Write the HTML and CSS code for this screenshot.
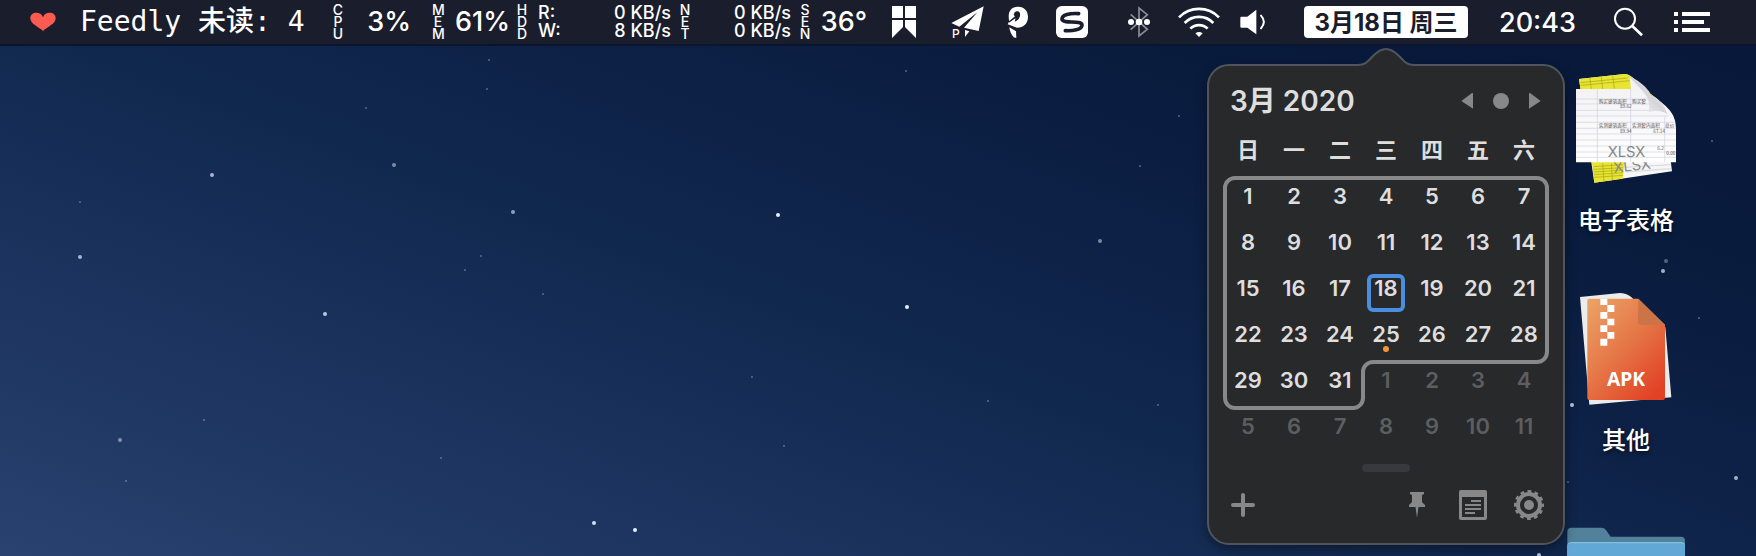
FILE: index.html
```html
<!DOCTYPE html>
<html lang="zh-CN">
<head>
<meta charset="utf-8">
<meta name="viewport" content="width=device-width, initial-scale=1">
<title>日历</title>
<link rel="stylesheet" href="styles.css">
</head>
<body>
<svg class="stars" aria-hidden="true">
  <g fill="#e8eefc">
    <circle cx="212" cy="175" r="2" opacity=".7"/><circle cx="394" cy="165" r="2" opacity=".5"/>
    <circle cx="80" cy="257" r="2" opacity=".7"/><circle cx="513" cy="212" r="2" opacity=".6"/>
    <circle cx="325" cy="314" r="2" opacity=".8"/><circle cx="594" cy="523" r="2" opacity=".9"/>
    <circle cx="778" cy="215" r="2"/><circle cx="907" cy="307" r="2"/><circle cx="635" cy="530" r="2"/>
    <circle cx="1100" cy="241" r="2" opacity=".5"/><circle cx="120" cy="440" r="2" opacity=".5"/>
    <circle cx="1572" cy="405" r="2" opacity=".8"/><circle cx="1736" cy="478" r="2" opacity=".7"/>
    <circle cx="1663" cy="271" r="2" opacity=".7"/><circle cx="1539" cy="555" r="2" opacity=".8"/>
  </g>
  <g fill="#c8d0e4" opacity=".4">
    <circle cx="80" cy="202" r="1"/><circle cx="481" cy="256" r="1"/><circle cx="465" cy="270" r="1"/>
    <circle cx="543" cy="294" r="1"/><circle cx="204" cy="420" r="1"/><circle cx="441" cy="458" r="1"/>
    <circle cx="487" cy="89" r="1"/><circle cx="366" cy="108" r="1"/><circle cx="489" cy="60" r="1"/>
    <circle cx="126" cy="481" r="1"/><circle cx="1140" cy="166" r="1"/><circle cx="752" cy="377" r="1"/>
    <circle cx="784" cy="446" r="1"/><circle cx="988" cy="401" r="1"/><circle cx="906" cy="71" r="1"/>
    <circle cx="1179" cy="116" r="1"/><circle cx="1158" cy="405" r="1"/><circle cx="1666" cy="261" r="2"/>
    <circle cx="1712" cy="141" r="1"/><circle cx="1568" cy="482" r="1"/><circle cx="1699" cy="318" r="1"/>
  </g>
</svg>

<header class="menubar">
  <div class="feed">
    <svg width="26" height="20" viewBox="95 32 78 58" aria-hidden="true"><path fill="#fc5b50" d="M134 88C120 74 96 68 96 49c0-10 8-16 18-16 9 0 17 4 20 14 3-10 11-14 20-14 10 0 18 6 18 16 0 19-24 25-38 39z"/></svg>
    <span class="feed-text">Feedly 未读: 4</span>
  </div>
  <div class="monitor">
    <span class="stack">C<br>P<br>U</span><span class="value value-cpu">3%</span>
    <span class="stack">M<br>E<br>M</span><span class="value value-mem">61%</span>
    <span class="stack">H<br>D<br>D</span>
    <span class="rates rates-disk"><span>R:</span><span>0 KB/s</span><span>W:</span><span>8 KB/s</span></span>
    <span class="stack">N<br>E<br>T</span>
    <span class="rates rates-net"><span>0 KB/s</span><span>0 KB/s</span></span>
    <span class="stack">S<br>E<br>N</span><span class="value value-temp">36°</span>
  </div>
  <nav class="extras">
    <button class="item" aria-label="窗口"><svg width="24" height="32" viewBox="0 0 24 32"><path fill="#fff" d="M0 0h11v12H0zM13 0h11v12H13zM0 14h11v7L0 32zM13 14h11v18L13 21z"/></svg></button>
    <button class="item item-plane" aria-label="发送"><svg width="34" height="33" viewBox="274 17 102 99"><path fill="#fff" d="M372 18l-97 50 24 11 54-43-40 46 44 10zM316 89l13 4-13 17z"/><text class="tiny-p" x="277" y="114">P</text></svg></button>
    <button class="item item-p" aria-label="P"><svg width="22" height="33" viewBox="199 18 66 99"><path fill="#fff" d="M205 60c-4-24 5-40 28-40 18 0 29 13 29 30 0 20-13 33-33 33l-28-10 5-9z"/><path fill="#1a1d2c" d="M219 45c1-9 7-13 13-11 9 3 8 18 0 25l-9 6 1-10-19 13v-4l18-15z"/><path fill="#fff" d="M206 82l20 12 1 20-8-2c-7-9-12-18-13-30z"/></svg></button>
    <button class="item item-s" aria-label="输入法"><svg width="32" height="32" viewBox="588 18 96 96"><rect x="588" y="18" width="96" height="96" rx="17" fill="#fff"/><path fill="none" stroke="#1a1d2c" stroke-width="11" stroke-linecap="round" d="M656 41c-27-2-50 4-50 16 0 15 59 3 60 18 0 15-29 18-50 17"/></svg></button>
    <button class="item item-bt" aria-label="蓝牙"><svg width="22" height="32" viewBox="804 21 66 96"><path fill="none" stroke="#8b8d98" stroke-width="5" d="M812 46l50 45-25 20V27l25 20-50 45"/><g fill="#fff"><circle cx="813" cy="69" r="9"/><circle cx="837" cy="69" r="10"/><circle cx="861" cy="69" r="9"/></g></svg></button>
    <button class="item item-wifi" aria-label="无线网络"><svg width="42" height="32" viewBox="954 16 126 96"><g fill="none" stroke="#fff" stroke-width="8"><path d="M957 50a84 84 0 0 1 120 0M974 67a60 60 0 0 1 86 0M991 84a37 37 0 0 1 52 0"/></g><path fill="#fff" d="M1006 98q11-8 22 0l-11 11z"/></svg></button>
    <button class="item item-sound" aria-label="音量"><svg width="26" height="26" viewBox="1139 27 78 78"><path fill="#fff" d="M1140 53q0-3 3-3h18l27-21v74l-27-20h-18q-3 0-3-3z"/><path fill="none" stroke="#fff" stroke-width="6" stroke-linecap="round" d="M1202 47q17 18 0 38"/></svg></button>
    <div class="date-item">
      <button class="date" aria-expanded="true" aria-controls="calendar">3月18日 周三</button>
      <section class="popover" id="calendar" aria-label="日历">
        <svg class="arrow" width="56" height="19" viewBox="0 0 56 19" aria-hidden="true"><path fill="#27292b" d="M0 17c8 0 10-4 15-9C20 3 23 1 28 1s8 2 13 7c5 5 7 9 15 9v2H0z"/><path fill="none" stroke="#50555d" stroke-width="2" d="M0 17c8 0 10-4 15-9C20 3 23 1 28 1s8 2 13 7c5 5 7 9 15 9"/></svg>
        <div class="cal-head">
          <h2>3月 2020</h2>
          <div class="cal-nav">
            <button aria-label="上个月"><svg width="12" height="18" viewBox="0 0 12 18"><path d="M12 2v14q0 1-1 0L1 9.500q-1-.5 0-1L11 1q1-.5 1 1z"/></svg></button>
            <button aria-label="今天"><svg width="16" height="16" viewBox="0 0 16 16"><circle cx="8" cy="8" r="8"/></svg></button>
            <button aria-label="下个月"><svg width="12" height="18" viewBox="0 0 12 18"><path d="M0 2v14q0 1 1 0l10-6.500q1-.5 0-1L1 1Q0 .5 0 2z"/></svg></button>
          </div>
        </div>
        <div class="month">
          <table>
            <thead><tr><th>日</th><th>一</th><th>二</th><th>三</th><th>四</th><th>五</th><th>六</th></tr></thead>
            <tbody>
              <tr><td>1</td><td>2</td><td>3</td><td>4</td><td>5</td><td>6</td><td>7</td></tr>
              <tr><td>8</td><td>9</td><td>10</td><td>11</td><td>12</td><td>13</td><td>14</td></tr>
              <tr><td>15</td><td>16</td><td>17</td><td class="today">18</td><td>19</td><td>20</td><td>21</td></tr>
              <tr><td>22</td><td>23</td><td>24</td><td class="event">25</td><td>26</td><td>27</td><td>28</td></tr>
              <tr><td>29</td><td>30</td><td>31</td><td class="next">1</td><td class="next">2</td><td class="next">3</td><td class="next">4</td></tr>
              <tr class="next"><td>5</td><td>6</td><td>7</td><td>8</td><td>9</td><td>10</td><td>11</td></tr>
            </tbody>
          </table>
          <svg class="outline" width="326" height="234" viewBox="0 0 326 234" aria-hidden="true"><path fill="none" stroke="#888" stroke-width="4" d="M12 2h302a10 10 0 0 1 10 10v164a10 10 0 0 1-10 10H150a10 10 0 0 0-10 10v26a10 10 0 0 1-10 10H12a10 10 0 0 1-10-10V12A10 10 0 0 1 12 2z"/></svg>
        </div>
        <div class="handle"></div>
        <div class="cal-foot">
          <button aria-label="添加"><svg width="24" height="24" viewBox="0 0 24 24"><path fill="none" stroke="#888" stroke-width="4" stroke-linecap="round" d="M12 2v20M2 12h20"/></svg></button>
          <div class="cal-tools">
            <button aria-label="固定"><svg width="16" height="26" viewBox="0 0 16 26"><path d="M1 0h14v2l-2 1v7l3 3v2h-6.500L8 26 6.500 15H0v-2l3-3V3L1 2z"/></svg></button>
            <button aria-label="日程"><svg width="28" height="30" viewBox="0 0 28 30"><path fill-rule="evenodd" d="M2 0h24q2 0 2 2v26q0 2-2 2H2q-2 0-2-2V2Q0 0 2 0zM3 7v20h22V7z"/><path d="M12 10h10v2H12zM6 14h16v2H6zM6 18h16v2H6zM6 22h10v2H6z"/></svg></button>
            <button aria-label="设置"><svg width="30" height="30" viewBox="0 0 30 30"><circle cx="15" cy="15" r="11" fill="none" stroke="#888" stroke-width="4"/><circle cx="15" cy="15" r="13.700" fill="none" stroke="#888" stroke-width="2.600" stroke-dasharray="3.800 3.373" stroke-dashoffset="1.900"/><circle cx="15" cy="15" r="5"/></svg></button>
          </div>
        </div>
      </section>
    </div>
    <time class="clock">20:43</time>
    <button class="item item-search" aria-label="搜索"><svg width="30" height="30" viewBox="972 23 90 90"><g fill="none" stroke="#fff"><circle cx="1005" cy="58" r="30" stroke-width="6"/><path stroke-width="8" d="M1026 79l30 29"/></g></svg></button>
    <button class="item item-list" aria-label="通知中心"><svg width="36" height="20" viewBox="0 0 36 20"><path fill="#fff" d="M0 0h4v4H0zM8 0h28v4H8zM0 8h4v4H0zM8 8h22v4H8zM0 16h4v4H0zM8 16h28v4H8z"/></svg></button>
  </nav>
</header>

<main class="desktop">
  <a class="file" href="#sheets">
    <svg width="120" height="120" viewBox="18 48 360 360" aria-hidden="true">
      <defs>
        <linearGradient id="sheet" x1="0" y1="0" x2="0" y2="1"><stop offset="0" stop-color="#f1f1f4"/><stop offset="1" stop-color="#fff"/></linearGradient>
        <linearGradient id="curl" x1="0" y1="1" x2="1" y2="0"><stop offset="0" stop-color="#fff"/><stop offset=".5" stop-color="#d5d5d9"/><stop offset="1" stop-color="#fff"/></linearGradient>
      </defs>
      <path fill="#f6f6f6" d="M57 87l137-15c14 0 30 14 45 30l74 72 23 190-233 34z"/>
      <path fill="#e8e432" d="M57 87l137-15c12 1 20 8 30 17l61 55-15 20-205-25zM95 330l98 5-4 51-86 12z"/>
      <path fill="none" stroke="#a5a51c" stroke-width="2" d="M62 98l140-14M63 106l146-14M90 84l4 34M124 80l4 38M158 76l5 40M100 350l88-6M101 358l88-5M101 366l88-6M102 374l87-6M103 382l86-6M128 340l4 54M154 340l3 50"/>
      <path fill="none" stroke="#c6c6ce" stroke-width="2" d="M196 352l136-8M198 366l136-10"/>
      <text class="sheet-name" x="162" y="369" transform="rotate(-7 162 369)">XLSX</text>
      <path fill="url(#sheet)" d="M48 117h165l-4-36c26 22 50 40 76 61 36 28 63 48 63 93v102H48z"/>
      <path fill="none" stroke="#cfd0de" stroke-width="2" d="M48 147h220M48 162h220M48 181h235M48 198h278M48 217h296M48 235h300M48 252h300M48 270h300M48 288h300M48 306h300M48 322h300M112 117v219M212 117v219M314 200v136"/>
      <path fill="#c9c61f" d="M252 118l33 24-12 5z"/>
      <path fill="url(#curl)" d="M208 80c24 8 44 24 60 45 4 16 14 12 22 20 14 12 26 26 32 48-10-10-34-14-56-6 4-22 2-40-16-62z"/>
      <g class="sheet-cells"><text x="116" y="158">购买建筑面积</text><text x="216" y="158">购买套</text><text x="180" y="175">89.62</text><text x="116" y="232">实测建筑面积</text><text x="216" y="232">实测套内面积</text><text x="315" y="232">总价</text><text x="180" y="249">89.94</text><text x="280" y="249">67.14</text><text x="292" y="300">6.2</text><text x="319" y="316">0.00</text></g>
      <text class="sheet-name" x="143" y="320">XLSX</text>
    </svg>
    <span>电子表格</span>
  </a>
  <a class="file" href="#others">
    <svg width="120" height="120" viewBox="18 48 360 360" aria-hidden="true">
      <defs><linearGradient id="apk" x1="0" y1="0" x2=".8" y2="1"><stop offset="0" stop-color="#eba468"/><stop offset=".5" stop-color="#e67848"/><stop offset="1" stop-color="#e14225"/></linearGradient></defs>
      <path fill="#ececec" d="M60 81l120-12c22 0 34 12 48 26l88 77 18 210-246 22z"/>
      <path fill="url(#apk)" d="M88 86h147l80 78v220q0 6-6 6H88q-6 0-6-6V92q0-6 6-6z"/>
      <path fill="#cb7546" d="M235 86l80 79h-74q-7 0-7-7z"/>
      <path fill="#fff" d="M121 86h21v19h-21zM142 105h21v21h-21zM121 126h21v20h-21zM142 146h21v20h-21zM121 166h21v20h-21zM142 186h21v20h-21zM121 206h21v21h-21z"/>
      <text class="apk-name" x="198" y="349">APK</text>
    </svg>
    <span>其他</span>
  </a>
  <a class="file" href="#folder" aria-label="文件夹">
    <svg width="120" height="120" viewBox="18 708 360 360" aria-hidden="true">
      <path fill="#51819b" d="M22 785q0-12 12-12h90q9 0 14 7l14 20h211q12 0 12 12v250H22z"/>
      <path fill="#83bfdf" d="M22 828q0-12 12-12h329q12 0 12 12v240H22z"/><path fill="#62a8d6" d="M22 830q0-10 12-10h329q12 0 12 10v238H22z"/>
    </svg>
  </a>
</main>
</body>
</html>
```
FILE: styles.css
```css
* { box-sizing: border-box; }

body {
  display: flex;
  flex-direction: column;
  margin: 0;
  height: 100vh;
  overflow: hidden;
  color: #fff;
  font-family: Inter, "Noto Sans CJK SC", sans-serif;
  background: linear-gradient(200deg, #07173a 0%, #091b3d 22%, #0d2146 40%, #11284e 55%, #162e57 65%, #1e3661 81%, #294270 100%);
}

button {
  display: inline-flex;
  align-items: center;
  justify-content: center;
  padding: 0;
  border: 0;
  background: none;
  color: inherit;
  font: inherit;
}

svg { display: block; flex: none; overflow: visible; }

.stars {
  position: absolute;
  inset: 0;
  width: 100%;
  height: 100%;
  overflow: hidden;
}

/* Menu bar */
.menubar {
  position: relative;
  z-index: 2;
  display: flex;
  flex: none;
  align-items: center;
  justify-content: flex-end;
  height: 46px;
  padding-right: 46px;
  background: #1a1d2c;
  border-bottom: 2px solid #0a1530;
  white-space: nowrap;
}

.feed, .monitor, .extras { display: flex; align-items: center; }

.feed-text {
  width: 224px;
  margin-left: 24px;
  font: 500 28px/44px "DejaVu Sans Mono", "Noto Sans CJK SC", monospace;
}

.monitor { margin-left: 28px; }

.stack {
  width: 12px;
  font-size: 14px;
  font-weight: 500;
  line-height: 12px;
  text-align: center;
}

.value {
  font-size: 27px;
  font-weight: 500;
  line-height: 44px;
  text-align: right;
}

.value-cpu { width: 67px; margin-right: 21px; }
.value-mem { width: 66px; margin-right: 6px; }
.value-temp { width: 56px; }

.rates {
  display: grid;
  font-size: 18px;
  font-weight: 500;
  line-height: 18px;
  text-align: right;
  margin-right: 8px;
}

.rates-disk {
  grid-template-columns: auto auto;
  width: 143px;
  padding-left: 10px;
}

.rates-disk span:nth-child(odd) { text-align: left; }
.rates-net { width: 100px; }

.extras { margin-left: 25px; }
.item-plane { margin-left: 35px; }
.item-p { margin-left: 22px; }
.item-s { margin-left: 27px; }
.item-bt { margin-left: 40px; }
.item-wifi { margin-left: 28px; }
.item-sound { margin-left: 20px; }
.item-search { margin-left: 41px; }
.item-list { margin-left: 30px; }

.tiny-p { fill: #fff; font: 500 36px Inter, sans-serif; }

.date-item { position: relative; margin-left: 38px; }

.date {
  width: 164px;
  height: 32px;
  padding-bottom: 4px;
  border-radius: 4px;
  background: #fff;
  color: #1a1d2c;
  font-size: 24px;
  font-weight: 700;
}

.clock {
  width: 74px;
  margin-left: 31px;
  font-size: 27px;
  font-weight: 500;
  text-align: center;
}

/* Calendar popover */
.popover {
  position: absolute;
  top: 58px;
  left: 50%;
  transform: translateX(-50%);
  width: max-content;
  padding: 0 16px 22px;
  border: 2px solid #50555d;
  border-radius: 22px;
  background: #27292b;
  color: #dededf;
  box-shadow: 0 4px 12px #0006;
}

.arrow {
  position: absolute;
  bottom: 100%;
  left: 50%;
  transform: translateX(-50%);
  margin-bottom: -1px;
}

.popover button { fill: #888; }

.cal-head {
  display: flex;
  align-items: center;
  justify-content: space-between;
  height: 56px;
  padding: 14px 0 0 5px;
}

.cal-head h2 { margin: 0; font-size: 28px; font-weight: 600; line-height: 36px; }
.cal-nav { display: flex; gap: 10px; }
.cal-nav button { width: 24px; height: 24px; }

.month { position: relative; }

table {
  border-collapse: collapse;
  table-layout: fixed;
  width: 322px;
  font-size: 22px;
  font-weight: 600;
}

th { height: 56px; padding: 0 0 4px; font-weight: 600; }

td {
  position: relative;
  height: 46px;
  padding: 0 0 10px;
  line-height: 36px;
  text-align: center;
}

.next { color: #5d5e60; }

.today::before {
  content: "";
  position: absolute;
  inset: 4px;
  border: 4px solid #4b8ddf;
  border-radius: 6px;
}

.event::after {
  content: "";
  position: absolute;
  bottom: 10px;
  left: 20px;
  width: 6px;
  height: 6px;
  border-radius: 50%;
  background: #f6962f;
}

.outline {
  position: absolute;
  bottom: 44px;
  left: -2px;
}

.handle {
  width: 48px;
  height: 8px;
  margin: 10px auto 17px;
  border-radius: 4px;
  background: #38393c;
}

.cal-foot {
  display: flex;
  justify-content: space-between;
  padding: 0 2px;
}

.cal-foot button { width: 32px; height: 32px; }
.cal-tools { display: flex; gap: 24px; }

/* Desktop */
.desktop {
  position: relative;
  display: flex;
  flex: 1;
  flex-direction: column;
  align-items: flex-end;
  gap: 50px;
  min-height: 0;
  overflow: hidden;
  padding: 20px 70px 0 0;
}

.file {
  display: flex;
  flex: none;
  flex-direction: column;
  align-items: center;
  gap: 20px;
  color: #fff;
  font-size: 24px;
  font-weight: 500;
  line-height: 30px;
  text-decoration: none;
  text-shadow: 0 2px 4px #000a;
}

.sheet-name { fill: #85858a; font: 44px Inter, sans-serif; text-shadow: none; }
.sheet-cells { fill: #555; font: 14px "Noto Sans CJK SC", sans-serif; text-shadow: none; }
.apk-name { fill: #fff; font: 700 58px "Noto Sans", sans-serif; text-anchor: middle; text-shadow: none; }
```
